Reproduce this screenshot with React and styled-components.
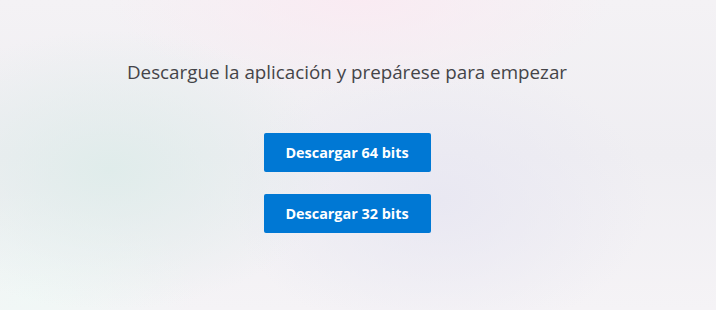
import React from 'react';
import styled, { createGlobalStyle } from 'styled-components';

const GlobalStyle = createGlobalStyle`
  html, body {
    margin: 0;
    padding: 0;
    height: 100%;
  }
  body {
    font-family: "Open Sans", "Noto Sans", "Liberation Sans", sans-serif;
  }
`;

const Page = styled.div`
  width: 716px;
  height: 310px;
  box-sizing: border-box;
  padding: 58px 22px 0 0;
  display: flex;
  flex-direction: column;
  align-items: center;
  overflow: hidden;
  background:
    radial-gradient(ellipse 320px 200px at 110px 170px, rgba(222, 236, 234, 0.9), rgba(222, 236, 234, 0) 70%),
    radial-gradient(ellipse 360px 140px at 360px 0px, rgba(250, 234, 242, 0.9), rgba(250, 234, 242, 0) 70%),
    radial-gradient(ellipse 300px 200px at 440px 200px, rgba(232, 231, 242, 0.9), rgba(232, 231, 242, 0) 70%),
    radial-gradient(ellipse 240px 160px at 30px 300px, rgba(240, 248, 246, 0.9), rgba(240, 248, 246, 0) 70%),
    linear-gradient(180deg, #f4f2f5 0%, #efeef2 50%, #f5f3f6 100%);
`;

const Heading = styled.h1`
  margin: 0;
  font-size: 18.8px;
  font-weight: 400;
  line-height: 28px;
  color: #444448;
  letter-spacing: 0;
`;

const ButtonStack = styled.div`
  margin-top: 47px;
  display: flex;
  flex-direction: column;
  gap: 22px;
`;

const DownloadButton = styled.button`
  width: 167px;
  height: 39px;
  padding: 0;
  border: none;
  border-radius: 2px;
  background: #0078d4;
  color: #ffffff;
  font-family: "Open Sans", "Noto Sans", sans-serif;
  font-size: 14.4px;
  font-weight: 700;
  cursor: pointer;

  &:hover {
    background: #106ebe;
  }
`;

export default function App() {
  return (
    <>
      <GlobalStyle />
      <Page>
        <Heading>Descargue la aplicación y prepárese para empezar</Heading>
        <ButtonStack>
          <DownloadButton>Descargar 64 bits</DownloadButton>
          <DownloadButton>Descargar 32 bits</DownloadButton>
        </ButtonStack>
      </Page>
    </>
  );
}
